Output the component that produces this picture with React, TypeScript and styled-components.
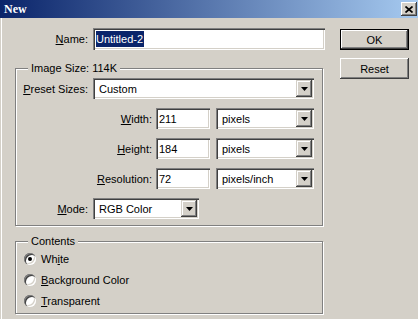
import React from "react";
import styled, { createGlobalStyle } from "styled-components";

const Global = createGlobalStyle`
  html, body { margin: 0; padding: 0; background: #d4d0c8; }
  body { font-family: "Liberation Sans", Arial, sans-serif; font-size: 11px; color: #000; }
`;

const Window = styled.div`
  width: 418px;
  height: 319px;
  background: #d4d0c8;
  display: flex;
  flex-direction: column;
  overflow: hidden;
`;

const TitleBar = styled.div`
  height: 18px;
  flex: none;
  display: flex;
  align-items: center;
  justify-content: space-between;
  padding: 0 1px 0 4px;
  background: linear-gradient(to right, #0a246a, #a6caf0);
`;

const Title = styled.span`
  font-family: "Liberation Serif", serif;
  font-weight: bold;
  font-size: 12px;
  color: #fff;
`;

const CloseButton = styled.div`
  width: 16px;
  height: 14px;
  box-sizing: border-box;
  background: #d4d0c8;
  box-shadow: inset -1px -1px #404040, inset 1px 1px #fff, inset -2px -2px #808080;
  display: flex;
  align-items: center;
  justify-content: center;
`;

const Body = styled.div`
  flex: 1;
  display: flex;
  box-shadow: inset 1px 0 #d4d0c8, inset 2px 0 #fff;
`;

const Main = styled.div`
  width: 325px;
  flex: none;
  display: flex;
  flex-direction: column;
  padding-top: 10px;
`;

const Side = styled.div`
  margin-left: 15px;
  padding-top: 11px;
  display: flex;
  flex-direction: column;
  gap: 8px;
`;

const Button = styled.div<{ $default?: boolean }>`
  width: 69px;
  height: 21px;
  box-sizing: border-box;
  display: flex;
  align-items: center;
  justify-content: center;
  background: #d4d0c8;
  border: ${(p) => (p.$default ? "1px solid #000" : "none")};
  box-shadow: inset -1px -1px #404040, inset 1px 1px #fff, inset -2px -2px #808080;
`;

const Row = styled.div<{ $h?: number }>`
  display: flex;
  align-items: center;
  height: ${(p) => p.$h ?? 21}px;
  & + & { margin-top: 9px; }
`;

const Label = styled.span<{ $w: number; $gap: number }>`
  width: ${(p) => p.$w}px;
  margin-right: ${(p) => p.$gap}px;
  text-align: right;
  white-space: nowrap;
  flex: none;
`;

const Sunken = styled.div<{ $w: number }>`
  width: ${(p) => p.$w}px;
  height: 100%;
  box-sizing: border-box;
  flex: none;
  background: #fff;
  display: flex;
  align-items: center;
  box-shadow: inset 1px 1px #808080, inset 2px 2px #404040, inset -1px -1px #fff, inset -2px -2px #d4d0c8;
`;

const TextField = styled(Sunken)`
  padding: 0 2px 0 3px;
`;

const Select = styled(Sunken)<{ $ml?: number }>`
  margin-left: ${(p) => p.$ml ?? 0}px;
  padding: 2px 2px 2px 6px;
`;

const SelectText = styled.span`
  flex: 1;
  white-space: nowrap;
`;

const DropButton = styled.div`
  width: 16px;
  height: 100%;
  box-sizing: border-box;
  background: #d4d0c8;
  display: flex;
  align-items: center;
  justify-content: center;
  box-shadow: inset -1px -1px #404040, inset 1px 1px #d4d0c8, inset -2px -2px #808080, inset 2px 2px #fff;
`;

const Highlight = styled.span`
  background: #0a246a;
  color: #fff;
  line-height: 16px;
  padding: 0 1px 0 0;
`;

const GroupBox = styled.div<{ $mt: number; $pt: number; $pb: number; $h?: number }>`
  position: relative;
  margin-top: ${(p) => p.$mt}px;
  margin-left: 15px;
  width: 308px;
  ${(p) => (p.$h ? `height: ${p.$h}px;` : "")}
  box-sizing: border-box;
  border: 1px solid #808080;
  box-shadow: 1px 1px 0 #fff, inset 1px 1px 0 #fff;
  padding: ${(p) => p.$pt}px 0 ${(p) => p.$pb}px 0;
`;

const Caption = styled.span`
  position: absolute;
  top: -7px;
  left: 12px;
  padding: 0 3px;
  line-height: 13px;
  background: #d4d0c8;
`;

const RadioRow = styled.div`
  display: flex;
  align-items: center;
  height: 21px;
  padding-left: 8px;
  gap: 5px;
`;

const RadioCircle = styled.span`
  width: 12px;
  height: 12px;
  border-radius: 50%;
  background: #fff;
  flex: none;
  display: flex;
  align-items: center;
  justify-content: center;
  box-shadow: inset 1px 1px 0 #808080, inset 2px 2px 0 #404040, inset -1px -1px 0 #fff, inset -2px -2px 0 #d4d0c8;
`;

const Dot = styled.span`
  width: 4px;
  height: 4px;
  border-radius: 50%;
  background: #000;
`;

const Key = styled.u`
  text-decoration: underline;
`;

const Arrow = () => (
  <svg width="7" height="4" viewBox="0 0 7 4">
    <polygon points="0,0 7,0 3.5,4" fill="#000" />
  </svg>
);

const CloseGlyph = () => (
  <svg width="8" height="7" viewBox="0 0 8 7">
    <path d="M0.5 0.5 L7.5 6.5 M7.5 0.5 L0.5 6.5" stroke="#000" strokeWidth="1.7" />
  </svg>
);

const Dropdown = ({ w, ml, text }: { w: number; ml?: number; text: string }) => (
  <Select $w={w} $ml={ml}>
    <SelectText>{text}</SelectText>
    <DropButton>
      <Arrow />
    </DropButton>
  </Select>
);

const Radio = ({ checked, children }: { checked?: boolean; children: React.ReactNode }) => (
  <RadioRow>
    <RadioCircle>{checked && <Dot />}</RadioCircle>
    <span>{children}</span>
  </RadioRow>
);

export default function App() {
  return (
    <>
      <Global />
      <Window>
        <TitleBar>
          <Title>New</Title>
          <CloseButton>
            <CloseGlyph />
          </CloseButton>
        </TitleBar>
        <Body>
          <Main>
            <Row $h={22}>
              <Label $w={88} $gap={5}>
                <Key>N</Key>ame:
              </Label>
              <TextField $w={232}>
                <Highlight>Untitled-2</Highlight>
              </TextField>
            </Row>

            <GroupBox $mt={18} $pt={9} $pb={6}>
              <Caption>Image Size: 114K</Caption>
              <Row>
                <Label $w={72} $gap={5}>
                  <Key>P</Key>reset Sizes:
                </Label>
                <Dropdown w={221} text="Custom" />
              </Row>
              <Row>
                <Label $w={136} $gap={4}>
                  <Key>W</Key>idth:
                </Label>
                <TextField $w={54}>211</TextField>
                <Dropdown w={98} ml={6} text="pixels" />
              </Row>
              <Row>
                <Label $w={136} $gap={4}>
                  <Key>H</Key>eight:
                </Label>
                <TextField $w={54}>184</TextField>
                <Dropdown w={98} ml={6} text="pixels" />
              </Row>
              <Row>
                <Label $w={136} $gap={4}>
                  <Key>R</Key>esolution:
                </Label>
                <TextField $w={54}>72</TextField>
                <Dropdown w={98} ml={6} text="pixels/inch" />
              </Row>
              <Row>
                <Label $w={72} $gap={5}>
                  <Key>M</Key>ode:
                </Label>
                <Dropdown w={106} text="RGB Color" />
              </Row>
            </GroupBox>

            <GroupBox $mt={15} $pt={6} $pb={0} $h={73}>
              <Caption>Contents</Caption>
              <Radio checked>
                Wh<Key>i</Key>te
              </Radio>
              <Radio>
                <Key>B</Key>ackground Color
              </Radio>
              <Radio>
                <Key>T</Key>ransparent
              </Radio>
            </GroupBox>
          </Main>
          <Side>
            <Button $default>OK</Button>
            <Button>Reset</Button>
          </Side>
        </Body>
      </Window>
    </>
  );
}
